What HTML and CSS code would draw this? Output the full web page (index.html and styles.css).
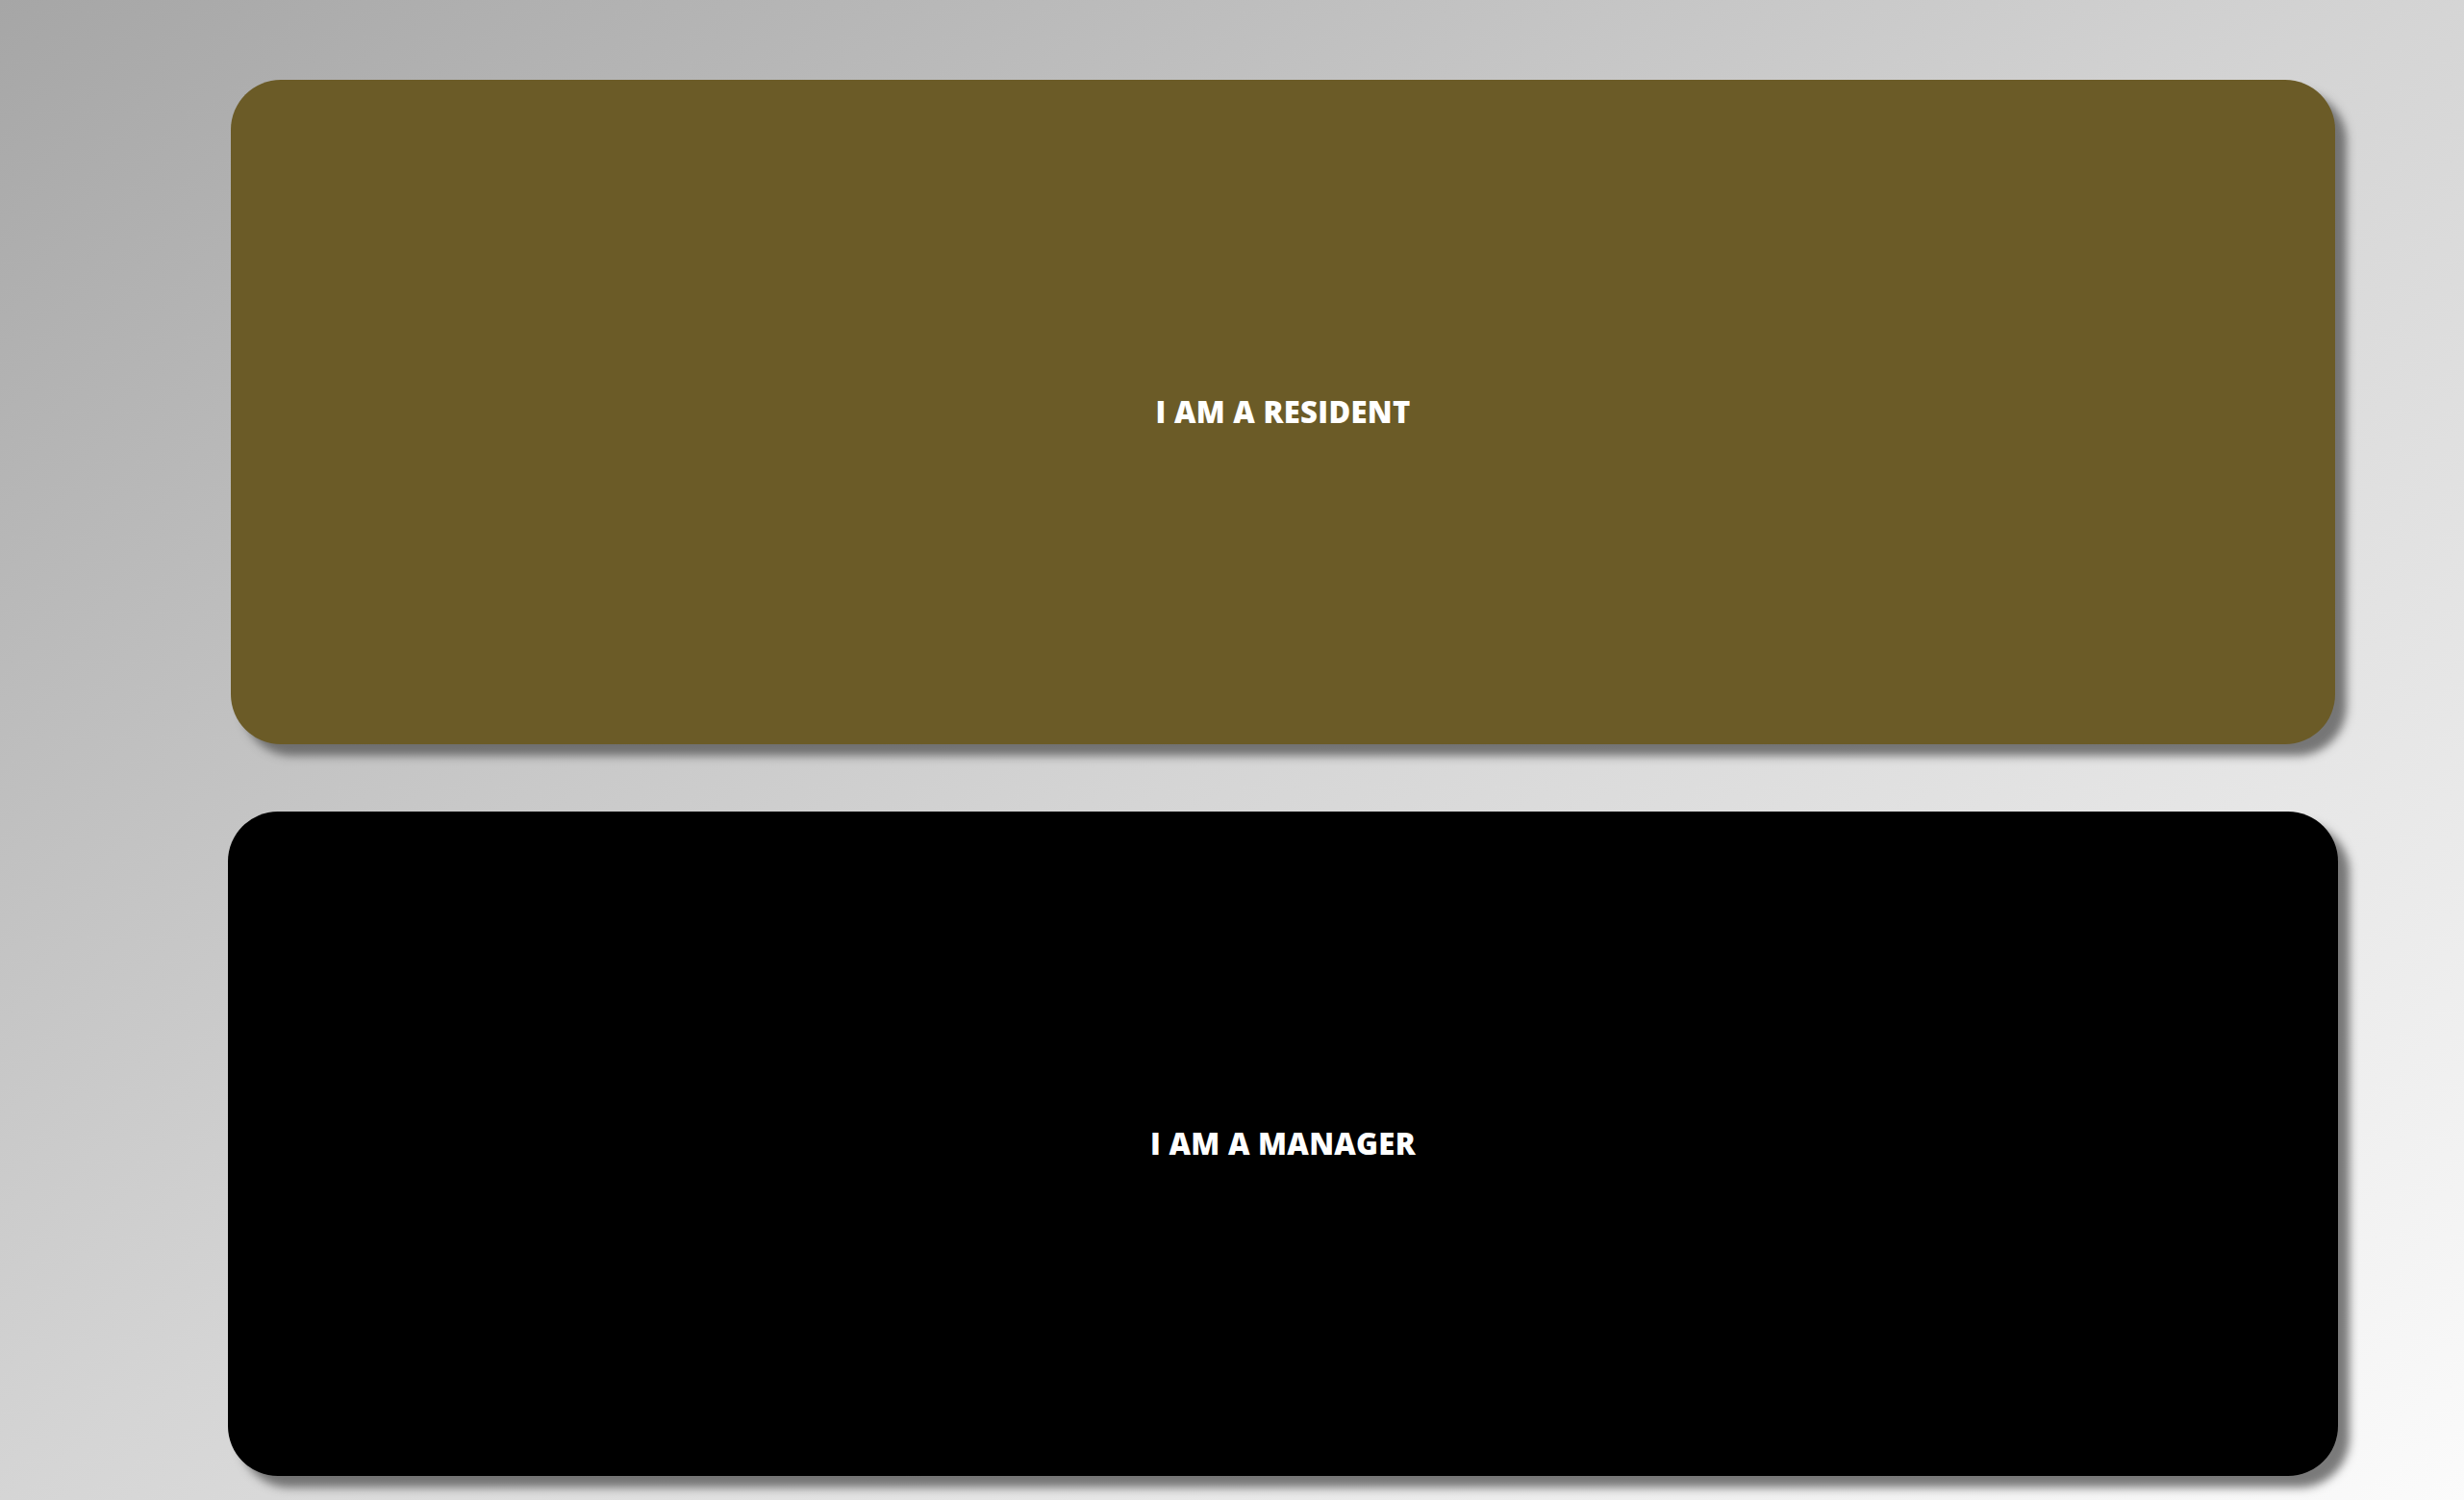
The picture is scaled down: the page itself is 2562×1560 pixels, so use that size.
FILE: index.html
```html
<!DOCTYPE html>
<html lang="en">
<head>
<meta charset="utf-8">
<title>Choose role</title>
<link rel="stylesheet" href="styles.css">
</head>
<body>
<main class="page">
  <a class="card card-resident" href="#"><span class="label">I AM A RESIDENT</span></a>
  <a class="card card-manager" href="#"><span class="label">I AM A MANAGER</span></a>
</main>
</body>
</html>
```

FILE: styles.css
```css
html, body {
  margin: 0;
  padding: 0;
  height: 100%;
}
body {
  background: linear-gradient(to bottom right, #a6a6a6 0%, #d5d5d5 50%, #fbfbfb 100%);
  font-family: "Open Sans", Lato, sans-serif;
  overflow: hidden;
}
.page {
  display: flex;
  flex-direction: column;
  align-items: flex-start;
  gap: 70px;
  padding: 83px 0 0 240px;
}
.card {
  display: flex;
  align-items: center;
  justify-content: center;
  height: 691px;
  border-radius: 52px;
  text-decoration: none;
  box-shadow: 12px 12px 10px rgba(90, 90, 90, 0.8);
}
.card-resident {
  width: 2188px;
  background: #6b5b27;
}
.card-manager {
  width: 2194px;
  margin-left: -3px;
  background: #000000;
}
.label {
  color: #ffffff;
  font-weight: 800;
  font-size: 31px;
  letter-spacing: 0.3px;
  line-height: 1;
}
```
